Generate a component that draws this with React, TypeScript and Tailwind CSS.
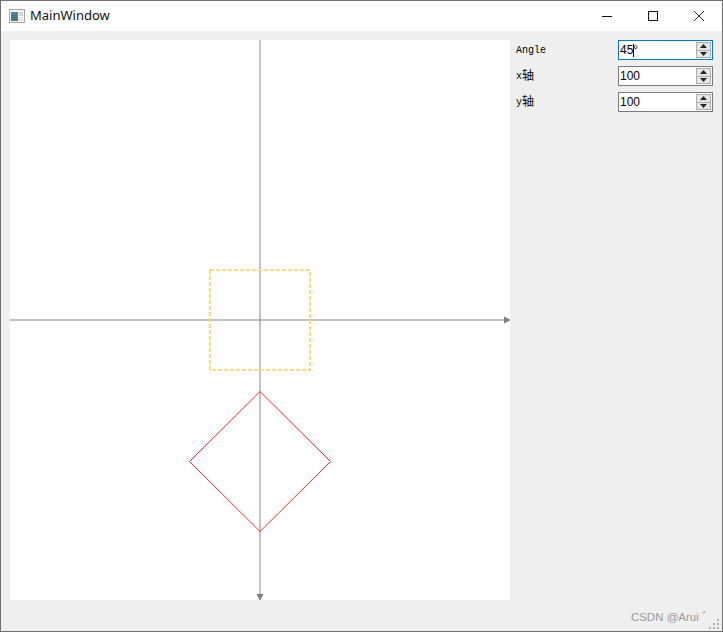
import React from "react";

function Spin({ value, focused }: { value: React.ReactNode; focused?: boolean }) {
  return (
    <div className={`flex h-5 w-[95px] items-center justify-between bg-white pl-[1px] pr-[1px] border ${focused ? "border-[#0078d7]" : "border-[#7a7a7a]"}`}>
      <span className="flex items-center text-[12px] leading-none text-black" style={{ fontFamily: '"Liberation Sans", sans-serif' }}>{value}</span>
      <div className="flex h-4 w-[15px] flex-col gap-0 border border-[#adadad] bg-[#e6e6e6]">
        <div className="flex flex-1 items-center justify-center">
          <svg width="7" height="4" viewBox="0 0 7 4"><path d="M3.5 0L7 4H0Z" fill="#222" /></svg>
        </div>
        <div className="h-px bg-[#adadad]" />
        <div className="flex flex-1 items-center justify-center">
          <svg width="7" height="4" viewBox="0 0 7 4"><path d="M0 0H7L3.5 4Z" fill="#222" /></svg>
        </div>
      </div>
    </div>
  );
}

function Row({ label, cjk, children }: { label: string; cjk?: string; children: React.ReactNode }) {
  return (
    <div className="flex h-5 items-center justify-between">
      <span className="flex items-center pt-[2px] text-[10px] leading-none text-black" style={{ fontFamily: '"Liberation Mono", "Noto Sans CJK SC", monospace' }}>
        {label}
        {cjk ? <span className="text-[12px] leading-none">{cjk}</span> : null}
      </span>
      {children}
    </div>
  );
}

export default function App() {
  return (
    <div className="relative flex h-[632px] w-[723px] flex-col overflow-hidden border border-[#6f6f6f] bg-[#efefef]">
      <div className="flex h-[30px] shrink-0 items-center bg-white">
        <svg className="ml-[8px]" width="16" height="14" viewBox="0 0 16 14">
          <rect x="0.5" y="0.5" width="15" height="13" fill="#f4f4f4" stroke="#a6a6a6" />
          <rect x="2" y="3" width="7" height="9" fill="#3f7f80" />
          <rect x="2" y="3" width="7" height="3" fill="#5a7da6" />
          <rect x="10" y="3" width="4" height="4" fill="#ccd6d6" />
          <rect x="10" y="8" width="4" height="4" fill="#e4e8e8" />
        </svg>
        <span className="ml-[5px] text-[13px] text-[#111]" style={{ fontFamily: '"Noto Sans", "Open Sans", sans-serif' }}>MainWindow</span>
        <div className="ml-auto flex h-full">
          <div className="flex w-[46px] items-center justify-center">
            <svg width="12" height="12" viewBox="0 0 12 12"><path d="M1 6.5H11" stroke="#111" /></svg>
          </div>
          <div className="flex w-[46px] items-center justify-center">
            <svg width="12" height="12" viewBox="0 0 12 12"><rect x="1.5" y="1.5" width="9" height="9" fill="none" stroke="#111" /></svg>
          </div>
          <div className="flex w-[46px] items-center justify-center">
            <svg width="12" height="12" viewBox="0 0 12 12"><path d="M1 1L11 11M11 1L1 11" stroke="#111" strokeWidth="0.9" /></svg>
          </div>
        </div>
      </div>
      <div className="flex flex-1 pl-[9px] pr-[9px] pt-[9px]">
        <svg className="block shrink-0 bg-white" width="500" height="560" viewBox="0 0 500 560">
          <g shapeRendering="crispEdges">
            <path d="M0 280H496" stroke="#808080" strokeOpacity="0.47" strokeWidth="2" />
            <path d="M250 0V555" stroke="#808080" strokeOpacity="0.47" strokeWidth="2" />
            <rect x="200" y="230" width="100" height="100" fill="none" stroke="#ffdb79" strokeWidth="2" strokeDasharray="4 2" />
          </g>
          <path d="M494 276.5L501 280L494 283.5Z" fill="#808080" />
          <path d="M246.5 554L250 561L253.5 554Z" fill="#808080" />
          <path d="M250 351.5L320.5 421.5L250 491.5L179.5 421.5Z" fill="none" stroke="#ff2a20" strokeWidth="1" />
        </svg>
        <div className="flex flex-1 flex-col gap-[6px] pl-[6px]">
          <Row label="Angle">
            <Spin focused value={<><span>45</span><span className="inline-block h-[13px] w-px bg-black" /><span className="-ml-px -mt-[1px]">°</span></>} />
          </Row>
          <Row label="x" cjk="轴"><Spin value="100" /></Row>
          <Row label="y" cjk="轴"><Spin value="100" /></Row>
        </div>
      </div>
      <div className="flex h-[30px] shrink-0 items-center justify-end pr-[2px]">
        <span className="mr-[1px] mt-[3px] text-[11.5px] text-[#9a9a9a]" style={{ fontFamily: '"Liberation Sans", sans-serif' }}>CSDN @Arui ﾞ</span>
        <svg className="mt-[16px]" width="11" height="11" viewBox="0 0 11 11" fill="#b0b0b0">
          <rect x="8" y="0" width="2" height="2" /><rect x="4" y="4" width="2" height="2" /><rect x="8" y="4" width="2" height="2" /><rect x="0" y="8" width="2" height="2" /><rect x="4" y="8" width="2" height="2" /><rect x="8" y="8" width="2" height="2" />
        </svg>
      </div>
    </div>
  );
}
